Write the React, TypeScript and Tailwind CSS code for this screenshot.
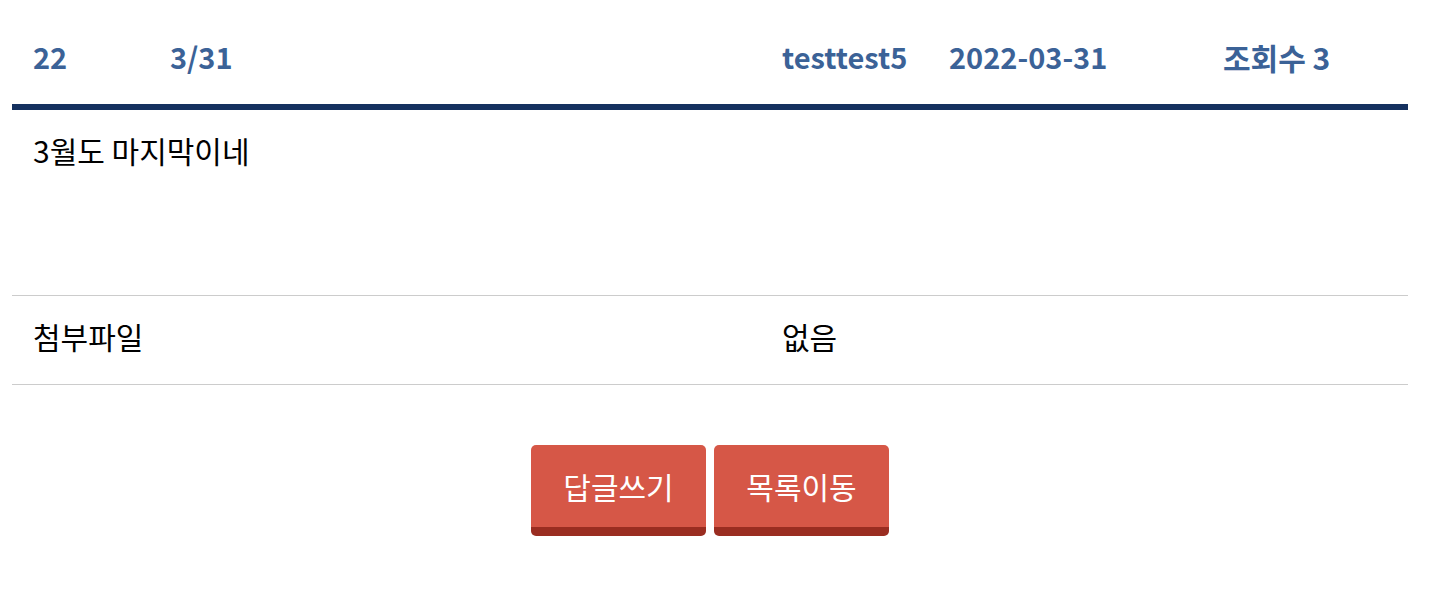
export default function App() {
  const font = { fontFamily: '"Noto Sans CJK KR", "Noto Sans", sans-serif' };

  return (
    <div className="min-h-screen bg-white pt-[10px] pl-[12px] pr-[30px] text-black" style={font}>
      {/* header row */}
      <div className="flex h-[94px] items-center text-[29px] font-bold text-[#3b6297] border-b-[6px] border-[#15315f] box-content">
        <div className="w-[137px] pl-[21px]">22</div>
        <div className="w-[612px] pl-[21px]">3/31</div>
        <div className="w-[167px] pl-[21px]">testtest5</div>
        <div className="w-[274px] pl-[21px]">2022-03-31</div>
        <div className="flex-1 pl-[21px] text-[30px]">조회수 3</div>
      </div>

      {/* content */}
      <div className="h-[186px] border-b border-[#cccccc] pl-[21px] pt-[20px] text-[30px] leading-[40px]">
        3월도 마지막이네
      </div>

      {/* attachment */}
      <div className="flex h-[89px] items-center border-b border-[#cccccc] pb-[8px] text-[30px]">
        <div className="w-[749px] pl-[21px]">첨부파일</div>
        <div className="flex-1 pl-[21px]">없음</div>
      </div>

      <div className="mt-[60px] flex justify-center gap-[8px]">
        <button className="h-[91px] w-[175px] rounded-[5px] bg-[#d65747] border-b-[9px] border-[#9a2d21] text-[30px] text-white">
          답글쓰기
        </button>
        <button className="h-[91px] w-[175px] rounded-[5px] bg-[#d65747] border-b-[9px] border-[#9a2d21] text-[30px] text-white">
          목록이동
        </button>
      </div>
    </div>
  );
}
